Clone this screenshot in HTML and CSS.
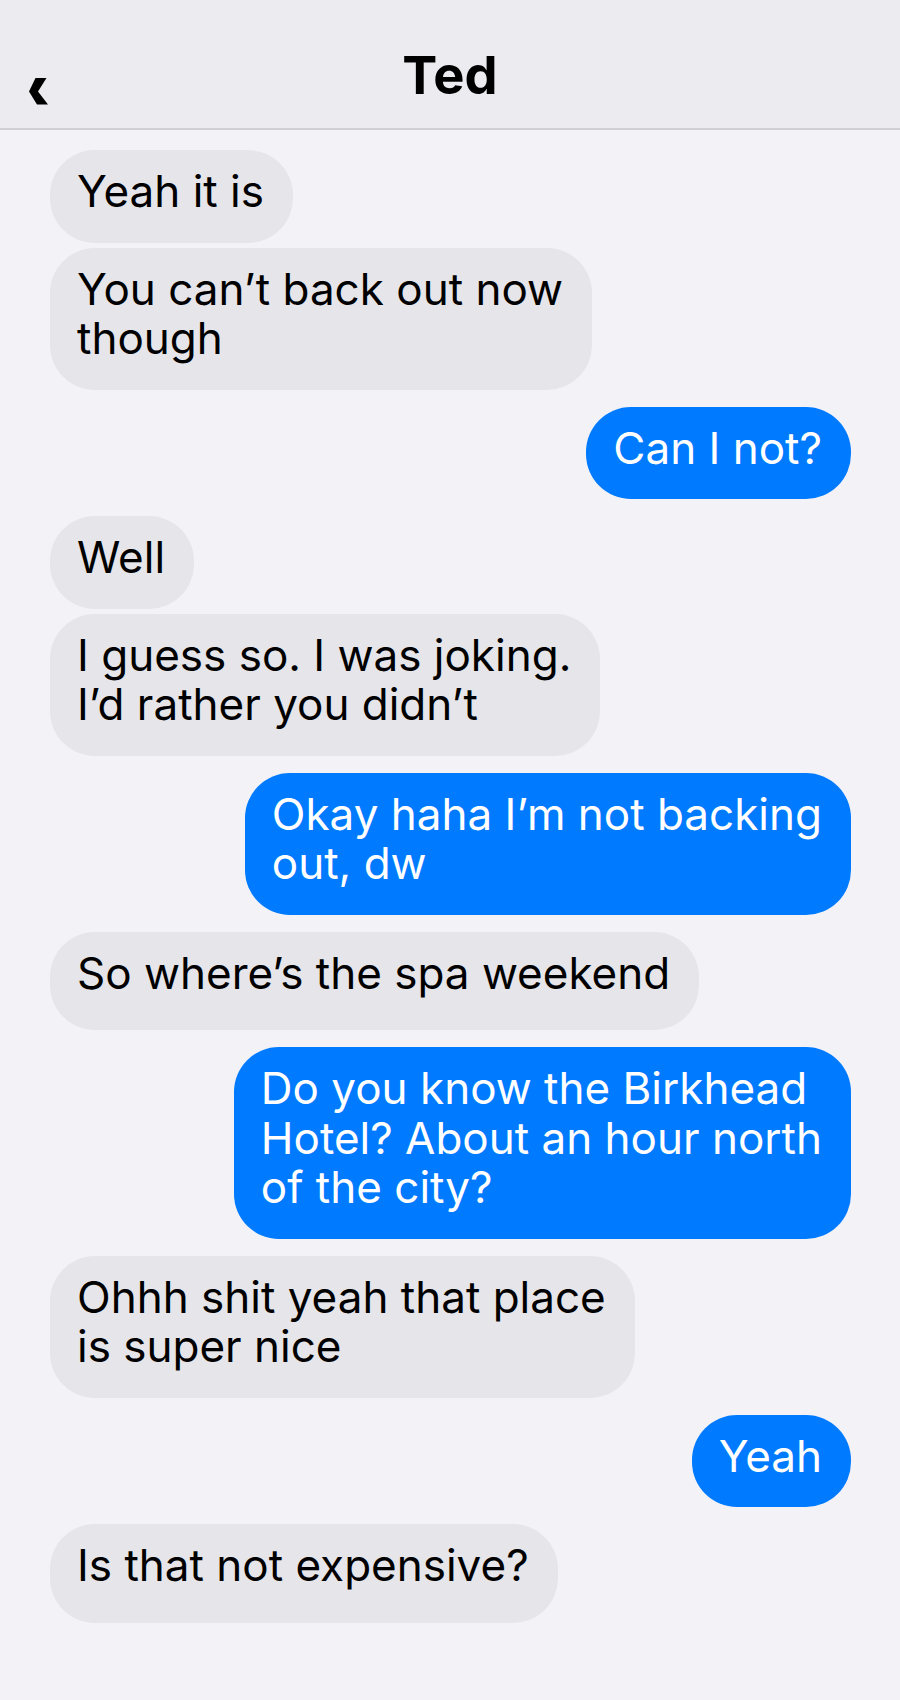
FILE: index.html
```html
<!DOCTYPE html>
<html lang="en">
<head>
  <meta charset="UTF-8" />
  <meta name="viewport" content="width=device-width, initial-scale=1.0"/>
  <title>Ted</title>
  <link rel="stylesheet" href="styles.css">
</head>
<body>
  <header class="chat-header">
    <a class="back" href="#" aria-label="Back">
      <svg width="20" height="27" viewBox="0 0 20 27">
        <polygon points="6.5,0 17.5,0 9,13.5 19,26.5 8,26.5 0,13.5" fill="#000"/>
      </svg>
    </a>
    <h1 class="title">Ted</h1>
    <span></span>
  </header>

  <main class="thread">
    <div class="group in">
      <div class="bubble">Yeah it is</div>
      <div class="bubble">You can’t back out now<br>though</div>
    </div>

    <div class="group out">
      <div class="bubble">Can I not?</div>
    </div>

    <div class="group in">
      <div class="bubble">Well</div>
      <div class="bubble">I guess so. I was joking.<br>I’d rather you didn’t</div>
    </div>

    <div class="group out">
      <div class="bubble">Okay haha I’m not backing<br>out, dw</div>
    </div>

    <div class="group in">
      <div class="bubble desc">So where’s the spa weekend</div>
    </div>

    <div class="group out">
      <div class="bubble">Do you know the Birkhead<br>Hotel? About an hour north<br>of the city?</div>
    </div>

    <div class="group in">
      <div class="bubble">Ohhh shit yeah that place<br>is super nice</div>
    </div>

    <div class="group out">
      <div class="bubble">Yeah</div>
    </div>

    <div class="group in">
      <div class="bubble desc">Is that not expensive?</div>
    </div>
  </main>
</body>
</html>
```

FILE: styles.css
```css
/* Reset and base styles */
* {
  box-sizing: border-box;
  margin: 0;
  padding: 0;
}

body {
  font-family: Inter, 'Liberation Sans', sans-serif;
  background-color: #f2f2f7;
  color: #000;
  min-height: 100vh;
}

/* Header */
.chat-header {
  height: 130px;
  background-color: #ebebf0;
  border-bottom: 2px solid #cfcfd4;
  display: grid;
  grid-template-columns: 1fr auto 1fr;
  align-items: end;
  padding: 0 29px 23px;
}

.back {
  display: block;
  width: 20px;
  height: 27px;
}

.back svg {
  display: block;
}

.title {
  font-size: 52.5px;
  line-height: 60px;
  font-weight: 700;
  text-align: center;
}

/* Messages */
.thread {
  display: flex;
  flex-direction: column;
  gap: 17px;
  padding: 20px 49px 40px 50px;
}

.group {
  display: flex;
  flex-direction: column;
  gap: 5px;
}

.group.in {
  align-items: flex-start;
}

.group.out {
  align-items: flex-end;
}

.bubble {
  font-size: 44px;
  line-height: 49.5px;
  padding: 17px 29px 26px 27px;
  border-radius: 45px;
  white-space: nowrap;
}

.bubble.desc {
  padding-bottom: 32px;
}

.in .bubble {
  background-color: #e5e5ea;
  color: #000;
}

.out .bubble {
  background-color: #007aff;
  color: #fff;
}
```
